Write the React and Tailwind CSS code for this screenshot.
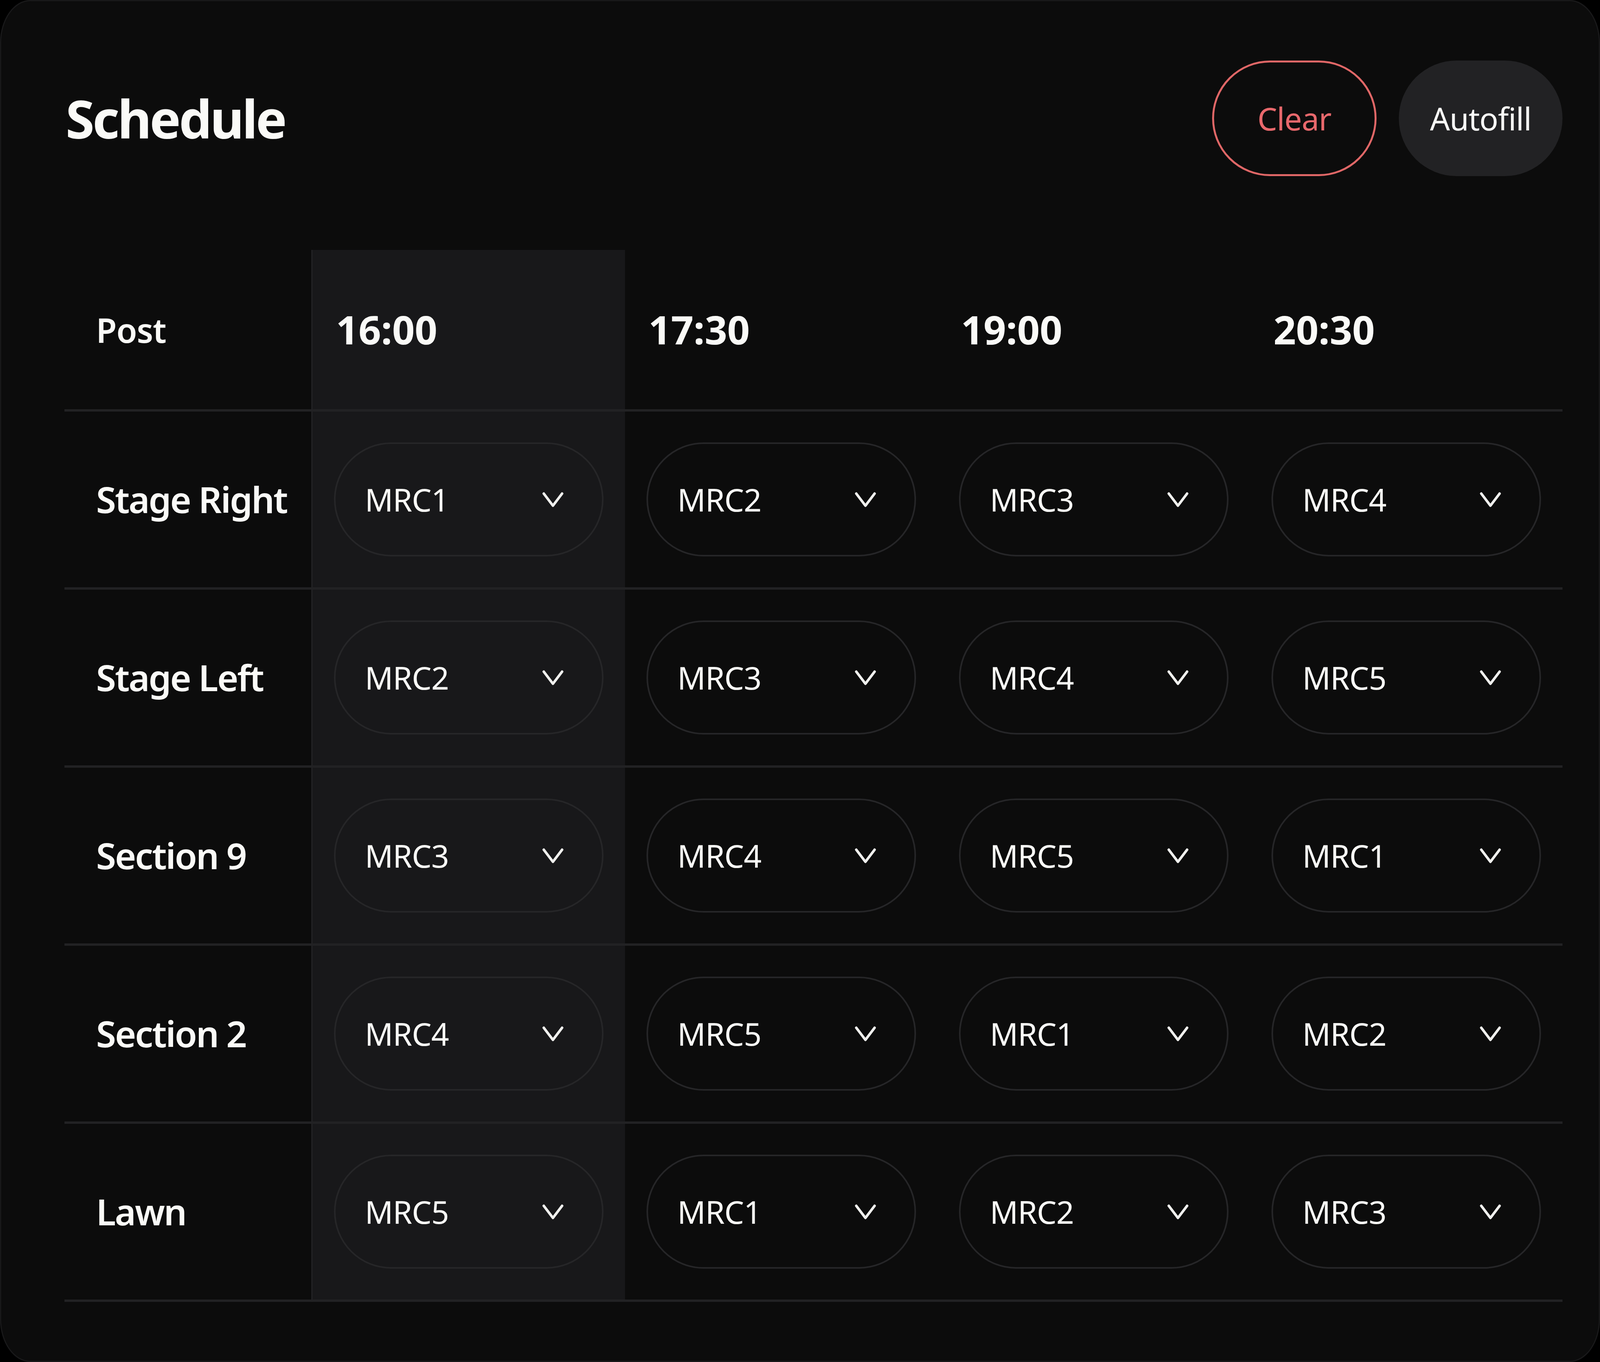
import React, { useState } from "react";

const times = ["16:00", "17:30", "19:00", "20:30"];

const posts = [
  { name: "Stage Right", slots: ["MRC1", "MRC2", "MRC3", "MRC4"] },
  { name: "Stage Left", slots: ["MRC2", "MRC3", "MRC4", "MRC5"] },
  { name: "Section 9", slots: ["MRC3", "MRC4", "MRC5", "MRC1"] },
  { name: "Section 2", slots: ["MRC4", "MRC5", "MRC1", "MRC2"] },
  { name: "Lawn", slots: ["MRC5", "MRC1", "MRC2", "MRC3"] },
];

// the current slot gets the lighter column
const activeCol = 0;

function Chevron() {
  return (
    <svg width="57" height="47" viewBox="0 0 57 47" fill="none" stroke="currentColor" strokeWidth="6.5" strokeLinecap="round" strokeLinejoin="round" className="shrink-0 text-[#f0f0ee]">
      <path d="M5 8 L28.5 39 L52 8" />
    </svg>
  );
}

function SlotSelect({ value }) {
  return (
    <button className="flex h-[292px] w-full items-center justify-between rounded-full border-[4px] border-[#262628] bg-transparent pl-[75px] pr-[97px] text-[80px] tracking-[-1px] text-[#fafaf7]">
      <span>{value}</span>
      <Chevron />
    </button>
  );
}

export default function App() {
  const [rows] = useState(posts);

  return (
    <div className="min-h-screen bg-black font-['Noto_Sans',sans-serif] text-[#fafaf7]">
      <div className="h-screen w-full overflow-hidden rounded-[78px_/_110px] border-[3px] border-[#19191a] bg-[#0c0c0c] pl-[162px] pr-[93px] pt-[152px]">
        {/* header */}
        <div className="flex h-[296px] items-center justify-between">
          <h1 className="pl-[3px] text-[134px] font-bold tracking-[-5px]">Schedule</h1>
          <div className="flex gap-[57px]">
            <button className="h-[296px] w-[421px] rounded-full border-[5px] border-[#e06767] text-[80px] tracking-[-1px] text-[#e8686c]">
              Clear
            </button>
            <button className="h-[296px] w-[419px] rounded-full bg-[#222224] text-[80px] tracking-[-1px] text-[#fafaf7]">
              Autofill
            </button>
          </div>
        </div>

        {/* table */}
        <div className="mt-[189px]">
          <div className="grid h-[414px] grid-cols-[635px_repeat(4,minmax(0,1fr))] border-b-[6px] border-[#222224]">
            <div className="flex items-center border-r-[3px] border-[#232325] pl-[81px] text-[86px] font-semibold tracking-[-1px]">
              Post
            </div>
            {times.map((t, i) => (
              <div
                key={t}
                className={`flex items-center pl-[60px] text-[101px] font-bold ${i === activeCol ? "bg-[#18181a]" : ""}`}
              >
                {t}
              </div>
            ))}
          </div>

          {rows.map((row) => (
            <div
              key={row.name}
              className="grid h-[456px] grid-cols-[635px_repeat(4,minmax(0,1fr))] border-b-[6px] border-[#222224]"
            >
              <div className="flex items-center border-r-[3px] border-[#232325] pl-[81px] text-[93px] font-semibold tracking-[-3px]">
                {row.name}
              </div>
              {row.slots.map((s, i) => (
                <div
                  key={i}
                  className={`flex items-center px-[55px] ${i === activeCol ? "bg-[#18181a]" : ""}`}
                >
                  <SlotSelect value={s} />
                </div>
              ))}
            </div>
          ))}
        </div>
      </div>
    </div>
  );
}
